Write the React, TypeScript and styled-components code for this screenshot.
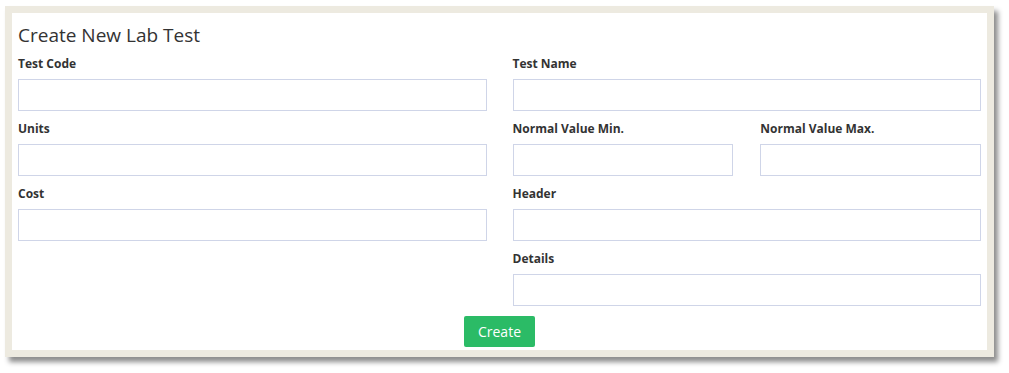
import { styled, createGlobalStyle } from 'styled-components';

const GlobalStyle = createGlobalStyle`
  html, body {
    margin: 0;
    padding: 0;
    background: #ffffff;
  }
  body {
    font-family: "Open Sans", "Noto Sans", Arial, sans-serif;
    color: #333333;
  }
`;

const Page = styled.div`
  padding: 6px 15px 16px 5px;
`;

const Card = styled.form`
  background: #ffffff;
  border: 7px solid #edeae0;
  box-shadow: 4px 5px 5px rgba(0, 0, 0, 0.45);
  padding: 10px 6px 3px 6px;
`;

const Title = styled.h3`
  margin: 0 0 8px 0;
  font-size: 19px;
  line-height: 24px;
  font-weight: 400;
  color: #333333;
`;

const Columns = styled.div`
  display: grid;
  grid-template-columns: 1fr 1fr;
  column-gap: 26px;
  align-items: start;
`;

const Column = styled.div`
  display: flex;
  flex-direction: column;
`;

const Pair = styled.div`
  display: grid;
  grid-template-columns: 1fr 1fr;
  column-gap: 27px;
`;

const Field = styled.div`
  display: flex;
  flex-direction: column;
  margin-bottom: 9px;
`;

const Label = styled.label`
  font-size: 12px;
  line-height: 18px;
  font-weight: 700;
  color: #333333;
  margin-bottom: 6px;
`;

const Input = styled.input`
  box-sizing: border-box;
  height: 32px;
  width: 100%;
  border: 1px solid #cfd5e8;
  border-radius: 0;
  padding: 4px 8px;
  font-family: inherit;
  font-size: 13px;
  outline: none;
`;

const Actions = styled.div`
  display: flex;
  justify-content: center;
  padding-top: 1px;
`;

const Button = styled.button`
  background: #2bbb66;
  color: #ffffff;
  border: none;
  border-radius: 2px;
  height: 31px;
  padding: 0 14px;
  font-family: inherit;
  font-size: 14px;
  cursor: pointer;
`;

function FormField({ label }: { label: string }) {
  return (
    <Field>
      <Label>{label}</Label>
      <Input type="text" />
    </Field>
  );
}

export default function App() {
  return (
    <Page>
      <GlobalStyle />
      <Card onSubmit={(e) => e.preventDefault()}>
        <Title>Create New Lab Test</Title>
        <Columns>
          <Column>
            <FormField label="Test Code" />
            <FormField label="Units" />
            <FormField label="Cost" />
          </Column>
          <Column>
            <FormField label="Test Name" />
            <Pair>
              <FormField label="Normal Value Min." />
              <FormField label="Normal Value Max." />
            </Pair>
            <FormField label="Header" />
            <FormField label="Details" />
          </Column>
        </Columns>
        <Actions>
          <Button type="submit">Create</Button>
        </Actions>
      </Card>
    </Page>
  );
}
